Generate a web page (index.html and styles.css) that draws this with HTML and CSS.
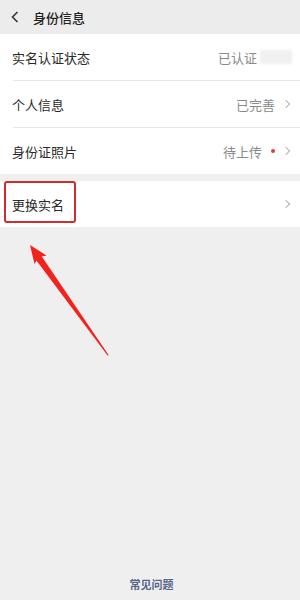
FILE: index.html
```html
<!DOCTYPE html>
<html lang="zh-CN">
  <head>
    <title>身份信息</title>
    <meta charset="UTF-8" />
    <link rel="stylesheet" href="styles.css">
  </head>
  <body>
    <div class="page">
      <div class="header">
        <svg class="back" width="8" height="12" viewBox="0 0 8 12">
          <path d="M6.5 1 L1.5 6 L6.5 11" fill="none" stroke="#333" stroke-width="1.6" />
        </svg>
        <span class="title">身份信息</span>
      </div>

      <div class="group">
        <div class="row">
          <span class="label">实名认证状态</span>
          <span class="value">已认证<span class="blur"></span></span>
        </div>
        <div class="divider"></div>
        <div class="row">
          <span class="label">个人信息</span>
          <span class="value">已完善<span class="chevron"></span></span>
        </div>
        <div class="divider"></div>
        <div class="row">
          <span class="label">身份证照片</span>
          <span class="value">待上传<span class="dot"></span><span class="chevron"></span></span>
        </div>
      </div>

      <div class="group second">
        <div class="row">
          <span class="label">更换实名</span>
          <span class="value"><span class="chevron"></span></span>
        </div>
        <div class="highlight"></div>
      </div>

      <div class="spacer"></div>
      <div class="footer">常见问题</div>

      <svg class="arrow" width="300" height="600" viewBox="0 0 300 600">
        <polygon points="30,245 46.5,255.5 41.8,256.5 108.6,355 107.6,355.4 36.4,260.5 34.5,264" fill="#f2231c" />
      </svg>
    </div>
  </body>
</html>
```

FILE: styles.css
```css
html, body {
  margin: 0;
  padding: 0;
}

body {
  font-family: "Noto Sans CJK SC", "Noto Sans", sans-serif;
  background-color: #efefef;
}

.page {
  position: relative;
  width: 300px;
  height: 600px;
  display: flex;
  flex-direction: column;
  overflow: hidden;
}

.header {
  height: 34px;
  display: flex;
  align-items: center;
  padding-left: 11px;
  background-color: #ececec;
}

.back {
  margin-right: 14px;
}

.title {
  font-size: 13px;
  font-weight: 500;
  color: #222;
}

.group {
  background-color: white;
}

.group.second {
  position: relative;
  margin-top: 7px;
}

.row {
  height: 46px;
  display: flex;
  align-items: center;
  justify-content: space-between;
  padding: 0 8px 0 12px;
}

.label {
  font-size: 13px;
  color: #2a2a2a;
}

.value {
  display: flex;
  align-items: center;
  font-size: 13px;
  color: #8a8a8a;
}

.divider {
  height: 1px;
  margin-left: 13px;
  background-color: #e8e8e8;
}

.blur {
  display: inline-block;
  width: 32px;
  height: 14px;
  margin-left: 3px;
  background-color: #f0f0f0;
  filter: blur(1.5px);
}

.dot {
  display: inline-block;
  width: 4px;
  height: 4px;
  border-radius: 50%;
  background-color: #d9413c;
  margin-left: 9px;
}

.chevron {
  display: inline-block;
  width: 5px;
  height: 5px;
  border-top: 1.3px solid #b4b4b4;
  border-right: 1.3px solid #b4b4b4;
  transform: rotate(45deg);
  margin: 0 3px 0 8px;
}

.highlight {
  position: absolute;
  left: 4px;
  top: 0;
  width: 68px;
  height: 38px;
  border: 2px solid #d22b2b;
  border-radius: 3px;
}

.spacer {
  flex: 1;
}

.footer {
  text-align: center;
  font-size: 11px;
  font-weight: bold;
  color: #56668a;
  padding-left: 3px;
  margin-bottom: 8px;
}

.arrow {
  position: absolute;
  left: 0;
  top: 0;
  pointer-events: none;
}
```
